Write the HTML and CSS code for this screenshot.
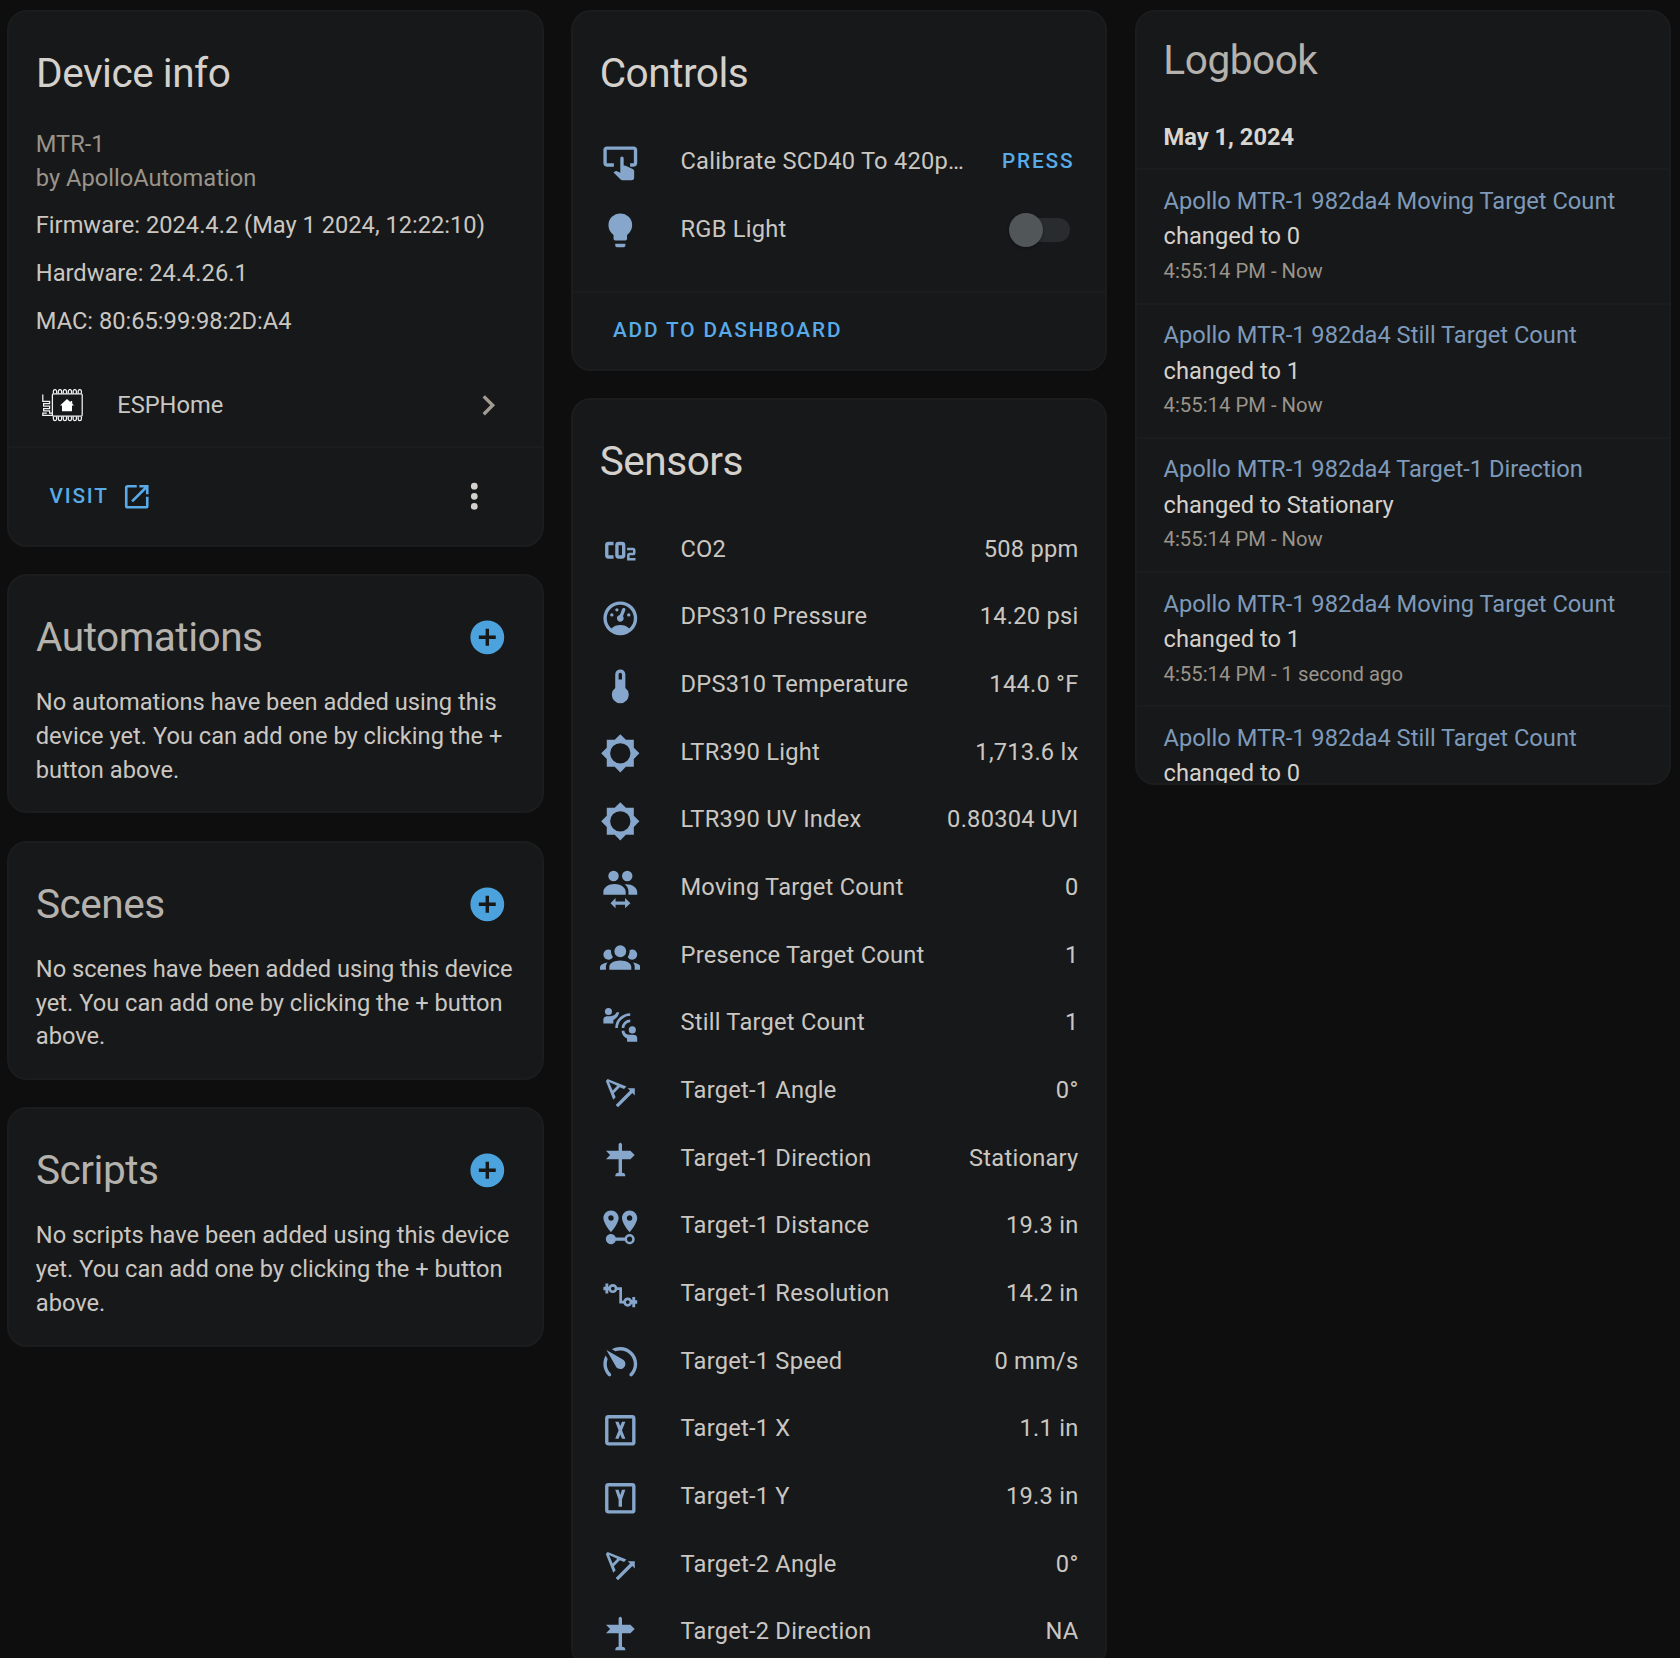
FILE: index.html
```
<!DOCTYPE html>
<html lang="en">
<head>
<meta charset="utf-8">
<title>Apollo MTR-1 982da4</title>
<link rel="stylesheet" href="styles.css">
</head>
<body>
<svg class="sprite" aria-hidden="true">
  <symbol id="i-button" viewBox="0 0 24 24"><path d="M20 2H4C2.9 2 2 2.9 2 4V12C2 13.1 2.9 14 4 14H8.2V12H4V4H20V12H17.8V14H20C21.1 14 22 13.1 22 12V4C22 2.9 21.1 2 20 2M12 9A1 1 0 0 1 14 9V13.3L15.2 13.5L19.3 15.3C19.9 15.6 20.2 16 20.2 16.7V20.5C20.2 21.4 19.6 22 18.7 22H13.2C12.8 22 12.5 21.9 12.2 21.6L8 17.5L8.7 16.8C8.9 16.6 9.2 16.5 9.5 16.5H9.7L12 17.6Z"/></symbol>
  <symbol id="i-bulb" viewBox="0 0 24 24"><path d="M12,2A7,7 0 0,0 5,9C5,11.38 6.19,13.47 8,14.74V17A1,1 0 0,0 9,18H15A1,1 0 0,0 16,17V14.74C17.81,13.47 19,11.38 19,9A7,7 0 0,0 12,2M9,21A1,1 0 0,0 10,22H14A1,1 0 0,0 15,21V20H9V21Z"/></symbol>
  <symbol id="i-co2" viewBox="0 0 24 24"><path d="M5,7A2,2 0 0,0 3,9V15A2,2 0 0,0 5,17H8V15H5V9H8V7H5M11,7A2,2 0 0,0 9,9V15A2,2 0 0,0 11,17H13A2,2 0 0,0 15,15V9A2,2 0 0,0 13,7H11M11,9H13V15H11V9M16,10.5V12H19.5V13.5H17.5A1.5,1.5 0 0,0 16,15V18H21V16.5H17.5V15H19.5A1.5,1.5 0 0,0 21,13.5V12A1.5,1.5 0 0,0 19.5,10.5H16Z"/></symbol>
  <symbol id="i-gauge" viewBox="0 0 24 24"><path d="M12,2A10,10 0 0,0 2,12A10,10 0 0,0 12,22A10,10 0 0,0 22,12A10,10 0 0,0 12,2M12,4A8,8 0 0,1 20,12C20,14.4 19,16.5 17.3,18C15.9,16.7 14,16 12,16C10,16 8.2,16.7 6.7,18C5,16.5 4,14.4 4,12A8,8 0 0,1 12,4M14,5.89C13.62,5.9 13.26,6.15 13.1,6.54L11.81,9.77L11.71,10C11,10.13 10.41,10.6 10.14,11.26C9.73,12.29 10.23,13.45 11.26,13.86C12.29,14.27 13.45,13.77 13.86,12.74C14.12,12.08 14,11.32 13.57,10.76L13.67,10.5L14.96,7.29L14.97,7.26C15.17,6.75 14.92,6.17 14.41,5.96C14.28,5.91 14.15,5.89 14,5.89M10,6A1,1 0 0,0 9,7A1,1 0 0,0 10,8A1,1 0 0,0 11,7A1,1 0 0,0 10,6M7,9A1,1 0 0,0 6,10A1,1 0 0,0 7,11A1,1 0 0,0 8,10A1,1 0 0,0 7,9M17,9A1,1 0 0,0 16,10A1,1 0 0,0 17,11A1,1 0 0,0 18,10A1,1 0 0,0 17,9Z"/></symbol>
  <symbol id="i-thermo" viewBox="0 0 24 24"><path d="M15 13V5A3 3 0 0 0 9 5V13A5 5 0 1 0 15 13M12 4A1 1 0 0 1 13 5V8H11V5A1 1 0 0 1 12 4Z"/></symbol>
  <symbol id="i-bright" viewBox="0 0 24 24"><path d="M12,18A6,6 0 0,1 6,12A6,6 0 0,1 12,6A6,6 0 0,1 18,12A6,6 0 0,1 12,18M20,15.31L23.31,12L20,8.69V4H15.31L12,0.69L8.69,4H4V8.69L0.69,12L4,15.31V20H8.69L12,23.31L15.31,20H20V15.31Z"/></symbol>
  <symbol id="i-moving" viewBox="0 0 24 24"><circle cx="8" cy="4.1" r="3.1"/><circle cx="16.1" cy="4.1" r="3.1"/><path d="M2 15.2V13.6C2 10.9 5 8.9 8.6 8.9S15.2 10.9 15.2 13.6V15.2ZM14.6 9C18.6 8.6 22 10.8 22 13.6V15.2H16.8V13.3C16.8 11.5 16 10 14.6 9ZM9.2 17.2V19.2H14.8V17.2L18 20.2L14.8 23.2V21.2H9.2V23.2L6.2 20.2Z"/></symbol>
  <symbol id="i-group" viewBox="0 0 24 24"><path d="M12,5.5A3.5,3.5 0 0,1 15.5,9A3.5,3.5 0 0,1 12,12.5A3.5,3.5 0 0,1 8.5,9A3.5,3.5 0 0,1 12,5.5M5,8C5.56,8 6.08,8.15 6.53,8.42C6.38,9.85 6.8,11.27 7.66,12.38C7.16,13.34 6.16,14 5,14A3,3 0 0,1 2,11A3,3 0 0,1 5,8M19,8A3,3 0 0,1 22,11A3,3 0 0,1 19,14C17.84,14 16.84,13.34 16.34,12.38C17.2,11.27 17.62,9.85 17.47,8.42C17.92,8.15 18.44,8 19,8M5.5,18.25C5.5,16.18 8.41,14.5 12,14.5C15.59,14.5 18.5,16.18 18.5,18.25V20H5.5V18.25M0,20V18.5C0,17.11 1.89,15.94 4.45,15.6C3.86,16.28 3.5,17.22 3.5,18.25V20H0M24,20H20.5V18.25C20.5,17.22 20.14,16.28 19.55,15.6C22.11,15.94 24,17.11 24,18.5V20Z"/></symbol>
  <symbol id="i-still" viewBox="0 0 24 24"><circle cx="5" cy="4.4" r="2.1"/><circle cx="19.1" cy="15.3" r="2.1"/><path d="M2 11.5V9.2C2 8 3 7.3 4.5 7.3H6C8 7.3 9.4 6 10 4.8L11.4 5C10.9 7 9.7 8.6 7.9 9.4V11.5ZM22 22.3V20C22 18.8 21 18.2 19.5 18.2H17.5C15.6 18.2 14.6 17.2 14.4 15.8H12.7C12.9 18 14 19.6 16 20.4V22.3Z"/><path class="wave" d="M9.8 14.2C9.8 9.8 13.4 6.3 17.9 6.2M13.6 14.2C13.6 11.9 15.5 10 17.9 10"/></symbol>
  <symbol id="i-angle" viewBox="0 0 24 24"><path fill-rule="evenodd" d="M4.49,4.21L3.43,5.27L7.85,16.4L9.26,15L8.2,12.5L11.73,9L14.21,10.03L15.63,8.61L4.49,4.21M7.5,10.9L5.35,5.95L10.2,8.2ZM20.57,9.6H16.33L17.74,11L9.26,19.5L10.67,20.9L19.15,12.43L20.57,13.84V9.6Z"/></symbol>
  <symbol id="i-sign" viewBox="0 0 24 24"><path d="M11,12H3.5L6,9.5L3.5,7H11V3L12,2L13,3V7H18L20.5,9.5L18,12H13V20A2,2 0 0,1 15,22H9A2,2 0 0,1 11,20V12Z"/></symbol>
  <symbol id="i-distance" viewBox="0 0 24 24"><path d="M6.5,8.11C5.61,8.11 4.89,7.39 4.89,6.5A1.61,1.61 0 0,1 6.5,4.89C7.39,4.89 8.11,5.61 8.11,6.5V6.5A1.61,1.61 0 0,1 6.5,8.11M6.5,2C4,2 2,4 2,6.5C2,9.87 6.5,14.86 6.5,14.86C6.5,14.86 11,9.87 11,6.5C11,4 9,2 6.5,2M17.5,8.11A1.61,1.61 0 0,1 15.89,6.5C15.89,5.61 16.61,4.89 17.5,4.89C18.39,4.89 19.11,5.61 19.11,6.5A1.61,1.61 0 0,1 17.5,8.11M17.5,2C15,2 13,4 13,6.5C13,9.87 17.5,14.86 17.5,14.86C17.5,14.86 22,9.87 22,6.5C22,4 20,2 17.5,2M17.5,16C16.23,16 15.1,16.8 14.68,18H9.32C8.77,16.44 7.05,15.62 5.5,16.17C3.93,16.72 3.11,18.44 3.66,20C4.22,21.56 5.93,22.38 7.5,21.83C8.35,21.53 9,20.85 9.32,20H14.69C15.24,21.56 16.96,22.38 18.5,21.83C20.08,21.28 20.9,19.56 20.35,18C19.92,16.8 18.78,16 17.5,16V16M17.5,20.5A1.5,1.5 0 0,1 16,19A1.5,1.5 0 0,1 17.5,17.5A1.5,1.5 0 0,1 19,19A1.5,1.5 0 0,1 17.5,20.5Z"/></symbol>
  <symbol id="i-resolution" viewBox="0 0 24 24"><g class="wave"><circle cx="7.6" cy="8" r="1.9"/><circle cx="16.4" cy="16" r="1.9"/><path d="M9.5 8H12.2V16H14.5"/></g><path d="M3.2 5H4.9V7H6V9H4.9V11H3.2V9H2V7H3.2ZM20.8 19H19.1V17H18V15H19.1V13H20.8V15H22V17H20.8Z"/></symbol>
  <symbol id="i-speed" viewBox="0 0 24 24"><path d="M12 16C13.66 16 15 14.66 15 13C15 11.88 14.39 10.9 13.5 10.39L3.79 4.77L9.32 14.35C9.82 15.33 10.83 16 12 16M12 3C10.19 3 8.5 3.5 7.03 4.32L9.13 5.53C10 5.19 11 5 12 5C16.42 5 20 8.58 20 13C20 15.21 19.11 17.21 17.66 18.65H17.65C17.26 19.04 17.26 19.67 17.65 20.06C18.04 20.45 18.68 20.45 19.07 20.07C20.88 18.26 22 15.76 22 13C22 7.5 17.5 3 12 3M2 13C2 15.76 3.12 18.26 4.93 20.07C5.32 20.45 5.95 20.45 6.34 20.06C6.73 19.67 6.73 19.04 6.34 18.65C4.89 17.2 4 15.21 4 13C4 12 4.19 11 4.54 10.1L3.33 8C2.5 9.5 2 11.18 2 13Z"/></symbol>
  <symbol id="i-x" viewBox="0 0 24 24"><path d="M3,5A2,2 0 0,1 5,3H19A2,2 0 0,1 21,5V19A2,2 0 0,1 19,21H5C3.89,21 3,20.1 3,19V5M5,5V19H19V5H5M9,7H11L12,9.5L13,7H15L13,12L15,17H13L12,14.5L11,17H9L11,12L9,7Z"/></symbol>
  <symbol id="i-y" viewBox="0 0 24 24"><path d="M3,5A2,2 0 0,1 5,3H19A2,2 0 0,1 21,5V19A2,2 0 0,1 19,21H5C3.89,21 3,20.1 3,19V5M5,5V19H19V5H5M9,7H11L12,10L13,7H15L13,12.7V17H11V12.7L9,7Z"/></symbol>
  <symbol id="i-plus" viewBox="0 0 24 24"><path d="M17,13H13V17H11V13H7V11H11V7H13V11H17M12,2A10,10 0 0,0 2,12A10,10 0 0,0 12,22A10,10 0 0,0 22,12A10,10 0 0,0 12,2Z"/></symbol>
</svg>

<main class="page">
  <div class="column">
    <section class="card">
      <h1 class="card-title">Device info</h1>
      <div class="device">
        <p class="muted">MTR-1</p>
        <p class="muted">by ApolloAutomation</p>
        <p class="extra">Firmware: 2024.4.2 (May 1 2024, 12:22:10)</p>
        <p class="extra">Hardware: 24.4.26.1</p>
        <p class="extra">MAC: 80:65:99:98:2D:A4</p>
      </div>
      <div class="integration">
        <svg class="esp" viewBox="0 0 42 33"><g fill="none" stroke="#f2f2f2" stroke-width="1.25"><rect x="10.4" y="4.9" width="29.8" height="22.2" rx="1"/><path d="M11.4 4.5V2.2a1.6 1.6 0 0 1 3.2 0V4.5M16.4 4.5V2.2a1.6 1.6 0 0 1 3.2 0V4.5M21.3 4.5V2.2a1.6 1.6 0 0 1 3.2 0V4.5M26.3 4.5V2.2a1.6 1.6 0 0 1 3.2 0V4.5M31.2 4.5V2.2a1.6 1.6 0 0 1 3.2 0V4.5M36.2 4.5V2.2a1.6 1.6 0 0 1 3.2 0V4.5M11.4 27.4V30a1.6 1.6 0 0 0 3.2 0V27.4M16.4 27.4V30a1.6 1.6 0 0 0 3.2 0V27.4M21.3 27.4V30a1.6 1.6 0 0 0 3.2 0V27.4M26.3 27.4V30a1.6 1.6 0 0 0 3.2 0V27.4M31.2 27.4V30a1.6 1.6 0 0 0 3.2 0V27.4M36.2 27.4V30a1.6 1.6 0 0 0 3.2 0V27.4M.8 5.5V12.3H7.6V14.7H1.6V17.1H7.6V19.5H1.6V21.9H7.6V24.2H10.4M10.4 26.4H.8V24.2H4.8"/></g><path fill="#fff" d="M25 10L28.6 13.2V12H30.2V14.6L32 16.4H30V22.2H20V16.4H18Z"/></svg>
        <span class="integration-name">ESPHome</span>
        <svg class="icon chevron" viewBox="0 0 24 24"><path d="M8.59,16.58L13.17,12L8.59,7.41L10,6L16,12L10,18L8.59,16.58Z"/></svg>
      </div>
      <div class="actions visit-row">
        <a class="btn">VISIT<svg class="open" viewBox="0 0 24 24"><path d="M14,3V5H17.59L7.76,14.83L9.17,16.24L19,6.41V10H21V3M19,19H5V5H12V3H5C3.89,3 3,3.9 3,5V19A2,2 0 0,0 5,21H19A2,2 0 0,0 21,19V12H19V19Z"/></svg></a>
        <svg class="icon dots" viewBox="0 0 24 24"><path d="M12,16A2,2 0 0,1 14,18A2,2 0 0,1 12,20A2,2 0 0,1 10,18A2,2 0 0,1 12,16M12,10A2,2 0 0,1 14,12A2,2 0 0,1 12,14A2,2 0 0,1 10,12A2,2 0 0,1 12,10M12,4A2,2 0 0,1 14,6A2,2 0 0,1 12,8A2,2 0 0,1 10,6A2,2 0 0,1 12,4Z"/></svg>
      </div>
    </section>

    <section class="card">
      <h1 class="card-title soft">Automations<svg class="icon add"><use href="#i-plus"/></svg></h1>
      <p class="empty">No automations have been added using this device yet. You can add one by clicking the + button above.</p>
    </section>
    <section class="card">
      <h1 class="card-title soft">Scenes<svg class="icon add"><use href="#i-plus"/></svg></h1>
      <p class="empty">No scenes have been added using this device yet. You can add one by clicking the + button above.</p>
    </section>
    <section class="card">
      <h1 class="card-title soft">Scripts<svg class="icon add"><use href="#i-plus"/></svg></h1>
      <p class="empty">No scripts have been added using this device yet. You can add one by clicking the + button above.</p>
    </section>
  </div>

  <div class="column">
    <section class="card">
      <h1 class="card-title">Controls</h1>
      <div class="rows controls">
        <div class="row"><svg class="icon"><use href="#i-button"/></svg><span class="name">Calibrate SCD40 To 420p…</span><a class="btn press">PRESS</a></div>
        <div class="row"><svg class="icon"><use href="#i-bulb"/></svg><span class="name">RGB Light</span><span class="toggle"><span class="thumb"></span></span></div>
      </div>
      <div class="actions dash-row"><a class="btn">ADD TO DASHBOARD</a></div>
    </section>

    <section class="card sensors">
      <h1 class="card-title">Sensors</h1>
      <div class="rows">
        <div class="row"><svg class="icon"><use href="#i-co2"/></svg><span class="name">CO2</span><span class="value">508 ppm</span></div>
        <div class="row"><svg class="icon"><use href="#i-gauge"/></svg><span class="name">DPS310 Pressure</span><span class="value">14.20 psi</span></div>
        <div class="row"><svg class="icon"><use href="#i-thermo"/></svg><span class="name">DPS310 Temperature</span><span class="value">144.0 °F</span></div>
        <div class="row"><svg class="icon"><use href="#i-bright"/></svg><span class="name">LTR390 Light</span><span class="value">1,713.6 lx</span></div>
        <div class="row"><svg class="icon"><use href="#i-bright"/></svg><span class="name">LTR390 UV Index</span><span class="value">0.80304 UVI</span></div>
        <div class="row"><svg class="icon"><use href="#i-moving"/></svg><span class="name">Moving Target Count</span><span class="value">0</span></div>
        <div class="row"><svg class="icon"><use href="#i-group"/></svg><span class="name">Presence Target Count</span><span class="value">1</span></div>
        <div class="row"><svg class="icon"><use href="#i-still"/></svg><span class="name">Still Target Count</span><span class="value">1</span></div>
        <div class="row"><svg class="icon"><use href="#i-angle"/></svg><span class="name">Target-1 Angle</span><span class="value">0°</span></div>
        <div class="row"><svg class="icon"><use href="#i-sign"/></svg><span class="name">Target-1 Direction</span><span class="value">Stationary</span></div>
        <div class="row"><svg class="icon"><use href="#i-distance"/></svg><span class="name">Target-1 Distance</span><span class="value">19.3 in</span></div>
        <div class="row"><svg class="icon"><use href="#i-resolution"/></svg><span class="name">Target-1 Resolution</span><span class="value">14.2 in</span></div>
        <div class="row"><svg class="icon"><use href="#i-speed"/></svg><span class="name">Target-1 Speed</span><span class="value">0 mm/s</span></div>
        <div class="row"><svg class="icon"><use href="#i-x"/></svg><span class="name">Target-1 X</span><span class="value">1.1 in</span></div>
        <div class="row"><svg class="icon"><use href="#i-y"/></svg><span class="name">Target-1 Y</span><span class="value">19.3 in</span></div>
        <div class="row"><svg class="icon"><use href="#i-angle"/></svg><span class="name">Target-2 Angle</span><span class="value">0°</span></div>
        <div class="row"><svg class="icon"><use href="#i-sign"/></svg><span class="name">Target-2 Direction</span><span class="value">NA</span></div>
      </div>
    </section>
  </div>

  <div class="column">
    <section class="card logbook">
      <h1 class="card-title soft">Logbook</h1>
      <h2 class="date">May 1, 2024</h2>
      <div class="entry"><p><a>Apollo MTR-1 982da4 Moving Target Count</a><br>changed to 0</p><p class="time">4:55:14 PM - Now</p></div>
      <div class="entry"><p><a>Apollo MTR-1 982da4 Still Target Count</a><br>changed to 1</p><p class="time">4:55:14 PM - Now</p></div>
      <div class="entry"><p><a>Apollo MTR-1 982da4 Target-1 Direction</a><br>changed to Stationary</p><p class="time">4:55:14 PM - Now</p></div>
      <div class="entry"><p><a>Apollo MTR-1 982da4 Moving Target Count</a><br>changed to 1</p><p class="time">4:55:14 PM - 1 second ago</p></div>
      <div class="entry"><p><a>Apollo MTR-1 982da4 Still Target Count</a><br>changed to 0</p></div>
    </section>
  </div>
</main>
</body>
</html>
```
FILE: styles.css
```
* { box-sizing: border-box; }

body {
  margin: 0;
  background: #0e0e0e;
  color: #cac7c2;
  font-family: Roboto, "Liberation Sans", sans-serif;
  font-size: 23.67px;
  line-height: 33.82px;
}

h1, h2, p { margin: 0; font-weight: 400; }

.sprite { position: absolute; width: 0; height: 0; }

.page {
  display: grid;
  grid-template-columns: repeat(3, 536.6px);
  column-gap: 27.1px;
  height: 1658px;
  padding: 10.3px 0 0 7.2px;
  overflow: hidden;
}

.column { display: flex; flex-direction: column; gap: 27.1px; min-height: 0; }

.card {
  flex: none;
  background: #171819;
  border: 2px solid #1b1c1d;
  border-radius: 20px;
  overflow: hidden;
}

.card-title {
  display: flex;
  align-items: center;
  justify-content: space-between;
  height: 102px;
  padding: 21px 33.8px 0 26.8px;
  font-size: 40.6px;
  line-height: 81px;
  letter-spacing: -0.012em;
  color: #d4d1cc;
}

.card-title.soft { color: #b5b2ad; }

.icon { flex: none; width: 40.6px; height: 40.6px; fill: #86a6cb; }
.wave { fill: none; stroke: #86a6cb; stroke-width: 1.6; }
.icon.add { fill: #4ca2dd; }

.device { padding: 13.7px 26.6px 0; }
.muted { color: #9a948b; }
.extra { margin-top: 13.8px; }

.integration {
  display: flex;
  align-items: center;
  height: 81.2px;
  margin-top: 26.5px;
  padding: 0 33px 0 33px;
}

.esp { width: 42px; height: 33px; }
.integration-name { flex: 1; margin-left: 33px; padding-top: 1px; }
.icon.chevron { fill: #a19b93; }

.actions {
  display: flex;
  align-items: center;
  justify-content: space-between;
  border-top: 2px solid #1b1c1d;
}

.btn {
  display: flex;
  align-items: center;
  color: #58abe8;
  font-size: 20.8px;
  font-weight: 500;
  letter-spacing: 0.0893em;
}

.visit-row { height: 98.6px; padding: 0 47px 0 40.2px; }
.open { width: 31.5px; height: 31.5px; margin-left: 12px; fill: #58abe8; }
.icon.dots { fill: #d4d1cc; }

.empty { padding: 8.2px 22px 24px 26.6px; }

.rows { padding: 14px 27px 0 27px; }
.row { display: flex; align-items: center; height: 67.66px; letter-spacing: 0.24px; }
.row .icon { margin-top: 2px; }
.name { flex: 1; margin-left: 40px; white-space: nowrap; }
.press { margin-right: 4px; }

.controls { padding-bottom: 27px; }
.dash-row { height: 78.2px; padding: 0 40px; }

.toggle {
  display: flex;
  align-items: center;
  width: 54px;
  height: 24px;
  margin-right: 8px;
  border-radius: 12px;
  background: #292c2e;
}

.thumb {
  flex: none;
  width: 34px;
  height: 34px;
  margin-left: -7px;
  border-radius: 50%;
  background: #515658;
  box-shadow: 0 1px 3px rgba(0, 0, 0, 0.35);
}

.sensors { flex: 1 0 auto; }

.logbook { height: 774.3px; }
.logbook .card-title { height: 89px; padding-top: 8px; }

.date {
  height: 67px;
  padding: 19.5px 27px 0;
  font-size: 23.67px;
  font-weight: 700;
  color: #d9d6d1;
}

.entry {
  height: 134.25px;
  padding: 13.5px 27px 0;
  border-top: 2px solid #1b1c1d;
  line-height: 35.5px;
  color: #d4d1cc;
}

.entry a { color: #7e9aba; }
.time { font-size: 20.3px; line-height: 33px; color: #9a948b; }
```
